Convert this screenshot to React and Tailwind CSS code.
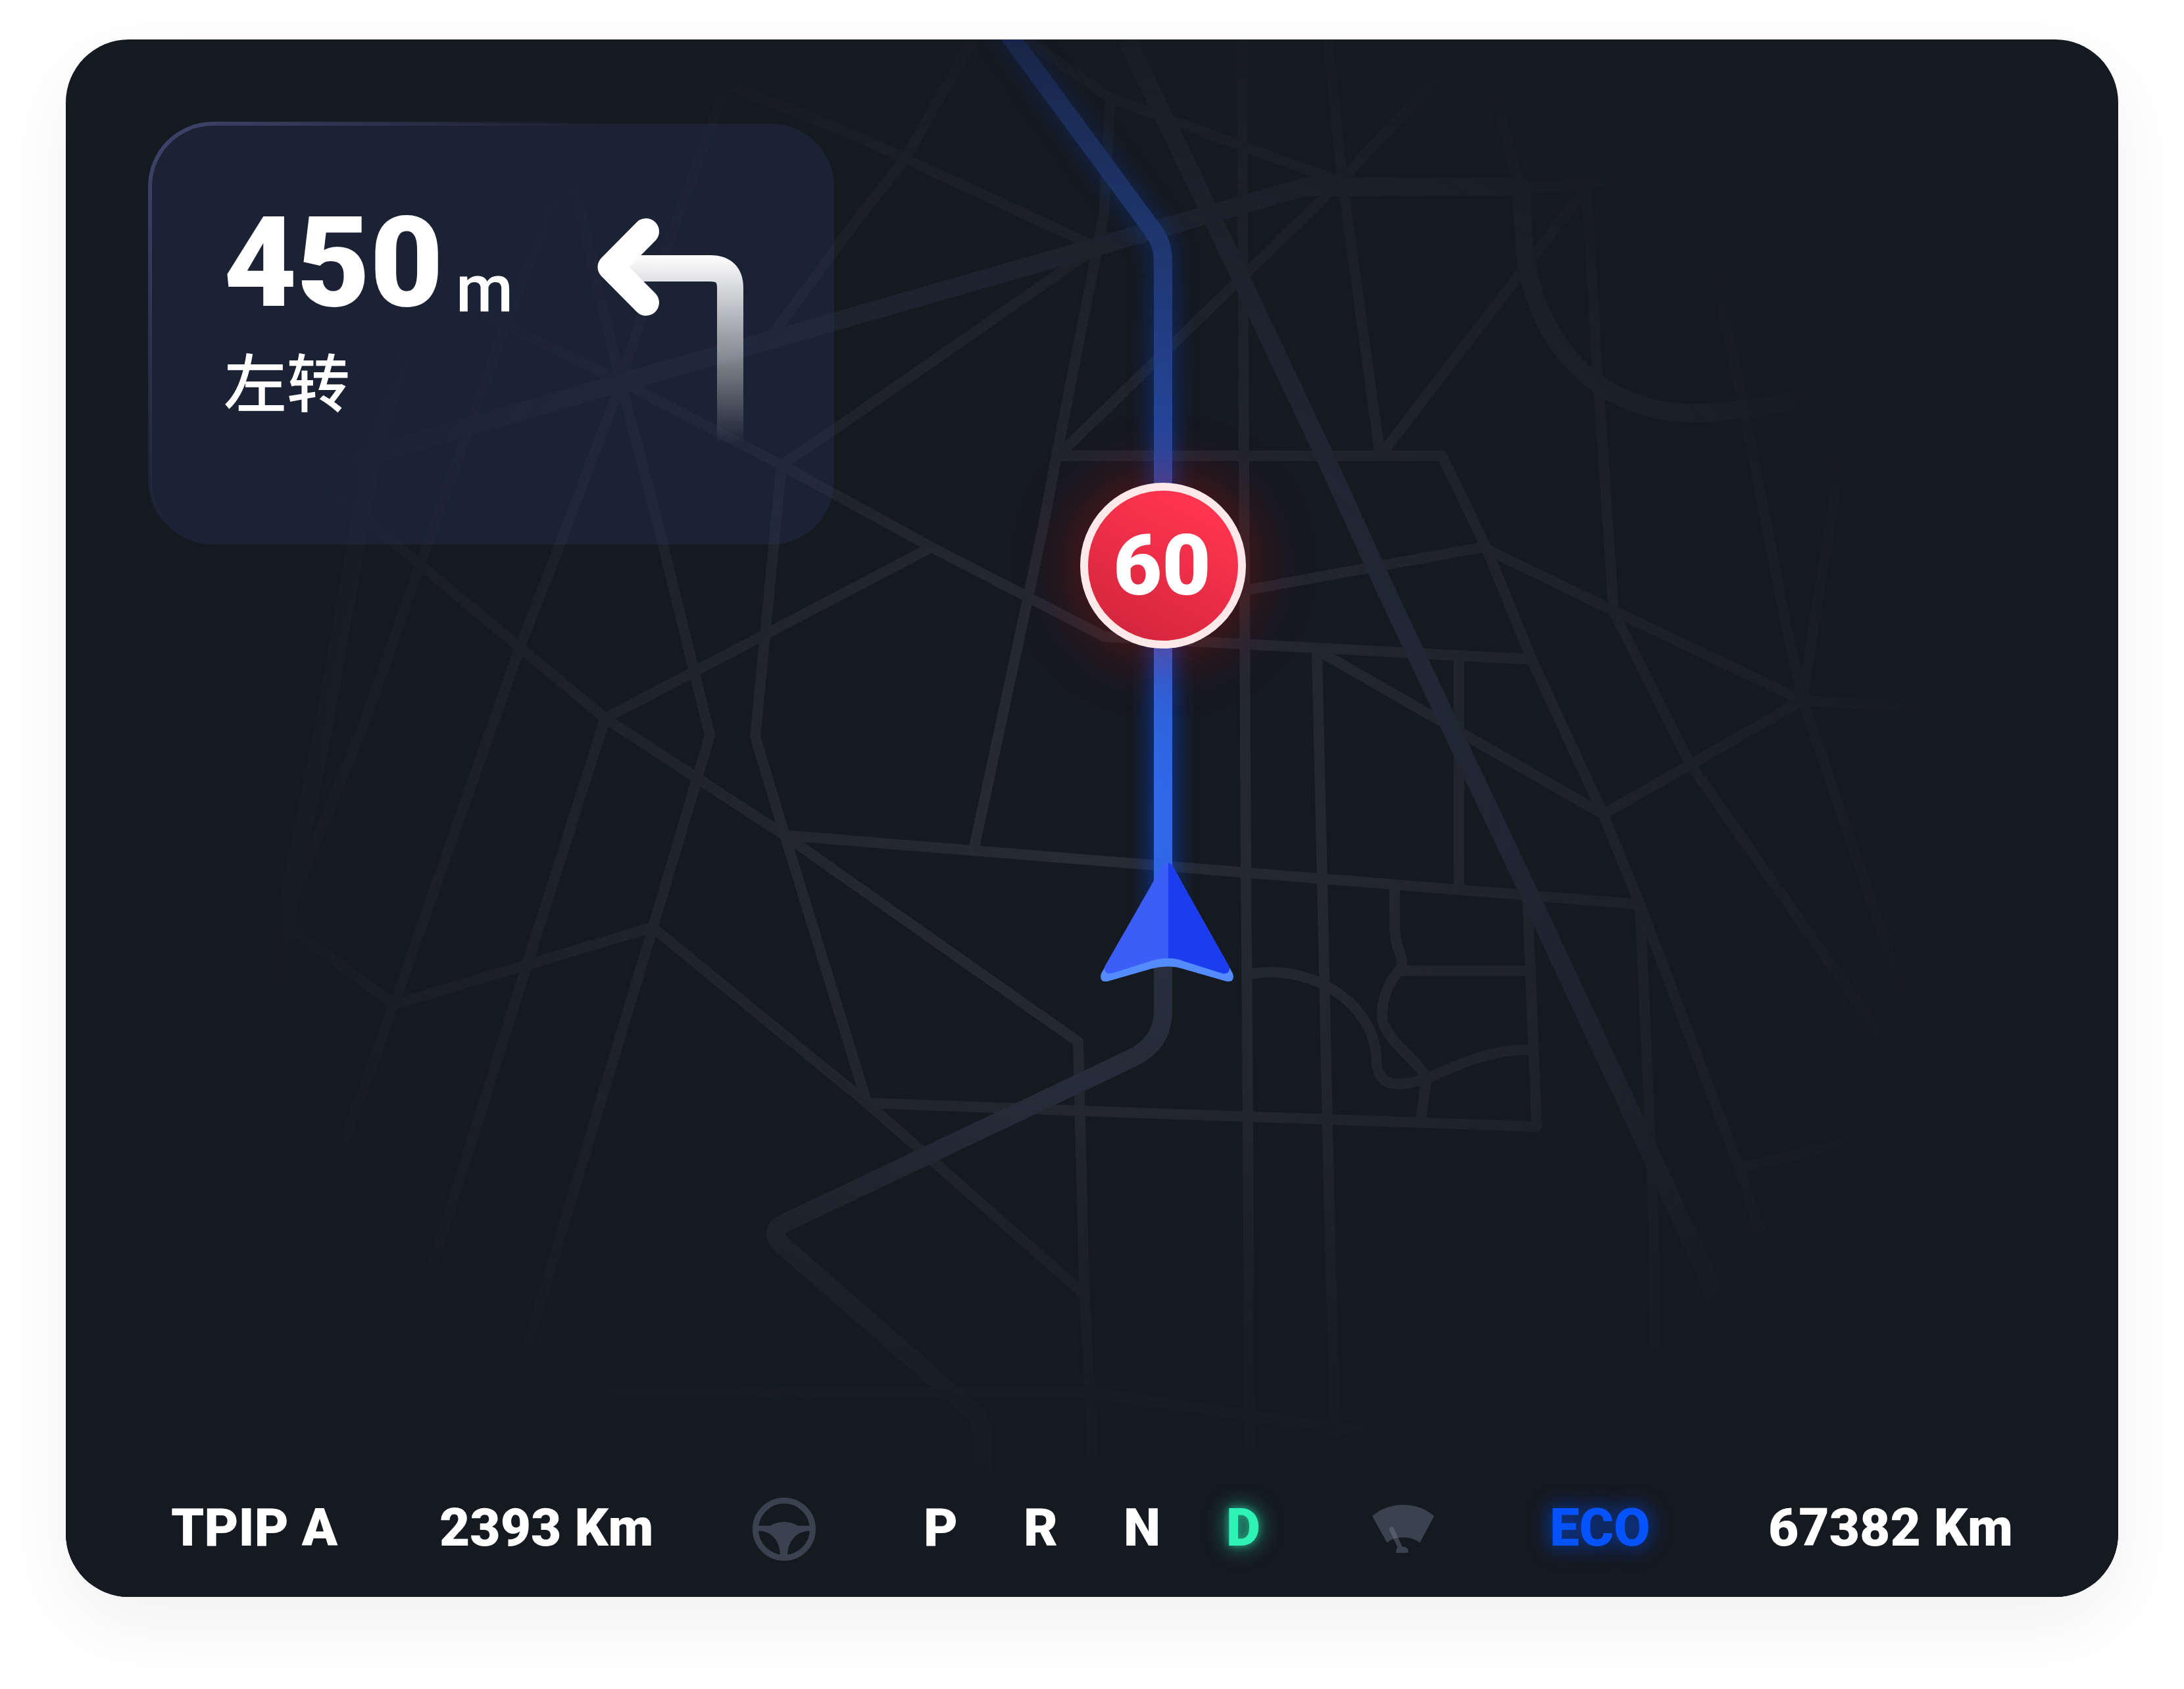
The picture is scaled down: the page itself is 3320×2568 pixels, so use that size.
const minorRoads = [
  "M1888 60L1892 900L1894 1327L1897 1697L1899 2240",
  "M2002 990L2010 1340L2022 1900L2033 2244",
  "M2218 1000V1354",
  "M733 477L944 580L1188 707L1416 832L1563 908L1679 968L1887 979L2336 1003",
  "M2005 990L2437 1238L2740 1065L2936 1078",
  "M1608 693H2192L2259 832L2328 1002L2437 1238L2493 1375L2642 1770L2684 1895",
  "M1890 898L2254 832L2460 932L2740 1065",
  "M2412 287L2428 557L2453 930L2569 1161L2864 1582",
  "M2594 350L2647 602L2713 940L2740 1065L2894 1512",
  "M2805 654L2759 940L2740 1065",
  "M1193 1270L1700 1311L2493 1375L2506 1665L2515 1900V2054",
  "M1318 1677L1700 1691L2336 1713L2322 1366",
  "M2120 1350V1404C2120 1448 2136 1452 2130 1472C2112 1490 2101 1516 2101 1544C2101 1580 2162 1617 2168 1640L2160 1703",
  "M2129 1476H2324",
  "M1897 1482C1985 1462 2085 1520 2092 1604C2093 1640 2105 1648 2125 1648C2150 1648 2160 1642 2168 1640C2210 1622 2265 1594 2328 1596",
  "M2649 1774L2848 1729",
  "M877 214L768 495L705 673L648 832L555 1096L434 1393L410 1510",
  "M497 740L568 800L920 1092L1193 1270L1639 1584L1648 1948L1662 2235",
  "M1105 127L975 481L944 582L850 830L791 982L599 1527L519 1747",
  "M866 254L944 582L1001 800L1079 1118L992 1412L791 2082",
  "M1188 707L1179 800L1148 1120L1193 1270L1318 1677",
  "M1416 832L920 1092L800 1470L644 1967",
  "M416 1393L599 1527L992 1410L1318 1677L1653 1972",
  "M1481 1288L1586 800L1606 693L1678 327L1688 149",
  "M1611 690L2034 280L2198 103",
  "M2098 693L2040 270L2019 60",
  "M2098 693L2410 287",
  "M1560 60L1688 149L2034 275",
  "M1101 127L1300 206L1667 376L1300 631L1188 707",
  "M1479 60L1376 241L1300 338L1172 512",
  "M2274 143L2310 287L2463 275",
  "M746 2118H1660L2329 2213",
];

const majorRoads = [
  "M1713 60L1841 327L2014 694L2108 900L2328 1366L2577 1900L2625 2011",
  "M612 540L560 720L541 828L493 1100L434 1393L412 1510",
  "M513 694L560 692L944 582L1300 480L1984 284H2312C2314 320 2316 370 2320 396C2341 528 2433 631 2586 628C2657 625 2698 614 2759 602",
];

const routeAhead = "M1514 26L1754 352Q1768 371 1768 396V1420";
const routeBehind =
  "M1768 1420V1536Q1768 1588 1718 1610L1192 1860Q1168 1872 1188 1892L1478 2146Q1494 2160 1494 2184V2300";

function MapCanvas() {
  return (
    <svg className="absolute inset-0 size-full" viewBox="100 60 3120 2368" fill="none">
      <defs>
        <radialGradient id="fade" gradientUnits="userSpaceOnUse" cx="1660" cy="1244" r="1340">
          <stop offset="0" stopColor="#fff" />
          <stop offset="0.42" stopColor="#fff" stopOpacity="0.64" />
          <stop offset="0.85" stopColor="#fff" stopOpacity="0.22" />
          <stop offset="1" stopColor="#fff" stopOpacity="0" />
        </radialGradient>
        <radialGradient id="route" gradientUnits="userSpaceOnUse" cx="1660" cy="1244" r="1340">
          <stop offset="0" stopColor="#3370fa" />
          <stop offset="0.42" stopColor="#26479f" />
          <stop offset="0.64" stopColor="#1f3872" />
          <stop offset="0.9" stopColor="#182445" />
          <stop offset="1" stopColor="#151920" />
        </radialGradient>
        <linearGradient id="floor" x1="0" y1="1700" x2="0" y2="2360" gradientUnits="userSpaceOnUse">
          <stop offset="0" stopColor="#151920" stopOpacity="0" />
          <stop offset="1" stopColor="#151920" />
        </linearGradient>
        <mask id="mapMask" maskUnits="userSpaceOnUse" x="100" y="60" width="3120" height="2368">
          <rect x="100" y="60" width="3120" height="2368" fill="url(#fade)" />
        </mask>
        <filter id="glow" filterUnits="userSpaceOnUse" x="1300" y="-60" width="800" height="1700">
          <feGaussianBlur stdDeviation="18" />
        </filter>
      </defs>

      <g mask="url(#mapMask)" strokeLinejoin="round">
        <g stroke="#282c35" strokeWidth="16">
          {minorRoads.map((d) => (
            <path key={d} d={d} />
          ))}
        </g>
        <g stroke="#282f40" strokeWidth="28">
          {majorRoads.map((d) => (
            <path key={d} d={d} />
          ))}
          <path d={routeBehind} stroke="#2c3342" />
        </g>
      </g>
      <rect x="100" y="1700" width="3120" height="728" fill="url(#floor)" />

      <g mask="url(#mapMask)">
        <path d={routeAhead} stroke="#0052ff" strokeOpacity="0.8" strokeWidth="28" filter="url(#glow)" />
      </g>
      <path d={routeAhead} stroke="url(#route)" strokeWidth="28" />
    </svg>
  );
}

function Vehicle() {
  return (
    <svg className="absolute left-[1564px] top-[1240px] h-[204px] w-[224px]" viewBox="1664 1300 224 204">
      <path
        fill="#548bff"
        d="M1768 1316Q1774 1308 1782 1316L1874 1480Q1878 1494 1864 1492L1798 1473Q1774 1466 1750 1473L1684 1492Q1670 1494 1674 1480Z"
      />
      <path fill="#3c5df8" d="M1776 1312Q1770 1311 1766 1318L1679 1470Q1678 1482 1690 1480L1750 1461Q1762 1457 1776 1457Z" />
      <path fill="#1b3dee" d="M1776 1312Q1779 1312 1782 1316L1869 1470Q1870 1482 1858 1480L1798 1461Q1788 1457 1776 1457Z" />
    </svg>
  );
}

function SpeedSign() {
  return (
    <div className="absolute left-[1542px] top-[674px] flex size-[252px] items-center justify-center rounded-full border-[12px] border-[#ffe8e8] bg-linear-[28deg,#cd243a,#ff344e_82%] pr-[3px] text-[128px] leading-none font-black shadow-[0_0_100px_rgba(255,10,0,0.36)]">
      60
    </div>
  );
}

function TurnLeft() {
  return (
    <svg className="h-[352px] w-[224px]" viewBox="908 328 224 352" fill="none">
      <defs>
        <linearGradient id="stem" x1="0" y1="388" x2="0" y2="674" gradientUnits="userSpaceOnUse">
          <stop stopColor="#fff" />
          <stop offset="1" stopColor="#fff" stopOpacity="0" />
        </linearGradient>
      </defs>
      <path d="M948 408H1080Q1110 408 1110 438V676" stroke="url(#stem)" strokeWidth="40" />
      <path d="M982 352L928.500 406L982 460" stroke="#fff" strokeWidth="40" strokeLinecap="round" strokeLinejoin="round" />
    </svg>
  );
}

function GuidancePanel() {
  return (
    <section className="relative ml-[128px] mt-[128px] flex h-[640px] w-[1040px] rounded-[96px] bg-[#2c3864]/28">
      <svg className="absolute -left-[4px] -top-[4px] h-[648px] w-[1048px]" viewBox="-4 -4 1048 648" fill="none">
        <defs>
          <linearGradient id="edge" x1="20" y1="20" x2="340" y2="340" gradientUnits="userSpaceOnUse">
            <stop stopColor="#3d4369" />
            <stop offset="1" stopColor="#3d4369" stopOpacity="0" />
          </linearGradient>
        </defs>
        <rect width="1040" height="640" rx="96" stroke="url(#edge)" strokeWidth="6" />
      </svg>
      <div className="ml-[112px] mt-[116px] w-[568px]">
        <div className="flex items-baseline leading-none">
          <span className="w-[353px] text-[192px] font-black">450</span>
          <span className="relative top-[8px] text-[100px] font-medium">m</span>
        </div>
        <p className="mt-[41px] text-[96px] leading-none font-medium">左转</p>
      </div>
      <div className="mt-[140px]">
        <TurnLeft />
      </div>
    </section>
  );
}

function SteeringWheel() {
  return (
    <svg className="size-[96px]" viewBox="0 0 96 96" fill="none">
      <circle cx="48" cy="48" r="43.500" stroke="#3b424f" strokeWidth="9" />
      <path
        fill="#3b424f"
        d="M6 42.800H26.500C33 39 40 37 48 37S63 39 69.500 42.800H90V50.500H87C65 51 53.500 68 53 88H42C42 68 31 51 9 50.500H6Z"
      />
    </svg>
  );
}

function Wiper() {
  return (
    <svg className="h-[74px] w-[96px]" viewBox="-1 0 96 74">
      <path fill="#3b424f" d="M0 17Q20 0 47 0T94 17L72.500 57.500Q62 49.500 47 49.500T22.500 57.500Z" />
      <path stroke="#8d99ae" strokeOpacity="0.3" strokeWidth="7" strokeLinecap="round" d="M29.500 37L42 64" />
      <path fill="#3b424f" d="M37 73Q34 64 45 63.500Q57 64 54.500 73Z" />
    </svg>
  );
}

function StatusBar() {
  return (
    <footer className="relative grid h-[96px] grid-cols-[408px_476px_260px_152px_152px_156px_221px_271px_332px_1fr] items-center pl-[160px] text-[80px] leading-none font-black whitespace-nowrap [&>span]:pb-[5px]">
      <span>TPIP A</span>
      <span>2393 Km</span>
      <SteeringWheel />
      <span>P</span>
      <span>R</span>
      <span>N</span>
      <span className="text-[#2ff3b5] [text-shadow:0_0_12px_#2ff3b580,0_0_32px_#2ff3b5c0]">D</span>
      <Wiper />
      <span className="text-[#0553ff] [text-shadow:0_0_32px_#0553ffd0]">ECO</span>
      <span>67382 Km</span>
    </footer>
  );
}

export default function App() {
  return (
    <main className="h-[2568px] w-[3320px] overflow-hidden bg-white px-[100px] pt-[60px] font-['Roboto','Noto_Sans_CJK_SC',sans-serif] text-white">
      <div className="rounded-[96px] shadow-[0_40px_120px_rgba(0,0,0,0.06)]">
        <div className="relative flex h-[2368px] w-[3120px] flex-col justify-between overflow-hidden rounded-[96px] bg-[#151920] pb-[55px]">
          <MapCanvas />
          <Vehicle />
          <SpeedSign />
          <GuidancePanel />
          <StatusBar />
        </div>
      </div>
    </main>
  );
}
